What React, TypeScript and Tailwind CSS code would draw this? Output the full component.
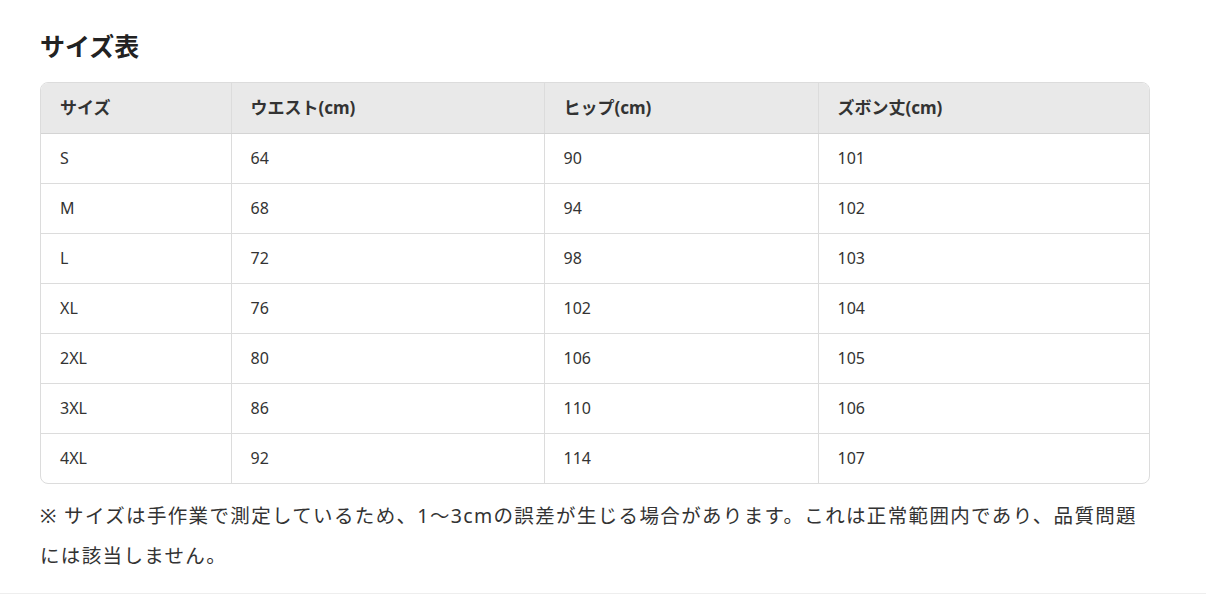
import React from "react";

const rows = [
  ["S", "64", "90", "101"],
  ["M", "68", "94", "102"],
  ["L", "72", "98", "103"],
  ["XL", "76", "102", "104"],
  ["2XL", "80", "106", "105"],
  ["3XL", "86", "110", "106"],
  ["4XL", "92", "114", "107"],
];

const font = {
  fontFamily: '"Noto Sans", "Noto Sans CJK JP", sans-serif',
};

export default function App() {
  return (
    <div className="w-[1206px] h-[594px] bg-white text-[#333] flex flex-col border-b border-[#eeeeee] overflow-hidden" style={font}>
      <div className="pl-[40px] w-[1150px] pt-[28px]">
        <h2 className="text-[25px] font-bold leading-[36px] text-[#222]">サイズ表</h2>
        <div className="mt-[18px] border border-[#dcdcdc] rounded-[8px] overflow-hidden">
          <table className="w-full border-collapse text-[16px] table-fixed">
            <colgroup>
              <col className="w-[190px]" />
              <col className="w-[313px]" />
              <col className="w-[274px]" />
              <col />
            </colgroup>
            <thead>
              <tr className="bg-[#e9e9e9] h-[50px]">
                {["サイズ", "ウエスト(cm)", "ヒップ(cm)", "ズボン丈(cm)"].map((h, i) => (
                  <th
                    key={h}
                    className={`text-left font-bold text-[17px] px-[19px] border-b border-[#d4d4d4] ${i > 0 ? "border-l border-l-[#dcdcdc]" : ""}`}
                  >
                    {h}
                  </th>
                ))}
              </tr>
            </thead>
            <tbody>
              {rows.map((r, ri) => (
                <tr key={ri} className={`h-[50px] ${ri > 0 ? "border-t border-[#dcdcdc]" : ""}`}>
                  {r.map((c, i) => (
                    <td
                      key={i}
                      className={`px-[19px] ${i > 0 ? "border-l border-[#dcdcdc]" : ""}`}
                    >
                      {c}
                    </td>
                  ))}
                </tr>
              ))}
            </tbody>
          </table>
        </div>
        <p className="mt-[12px] text-[19.5px] tracking-[1.35px] leading-[40px] text-[#333]">
          ※ サイズは手作業で測定しているため、1〜3cmの誤差が生じる場合があります。これは正常範囲内であり、品質問題には該当しません。
        </p>
      </div>
    </div>
  );
}
